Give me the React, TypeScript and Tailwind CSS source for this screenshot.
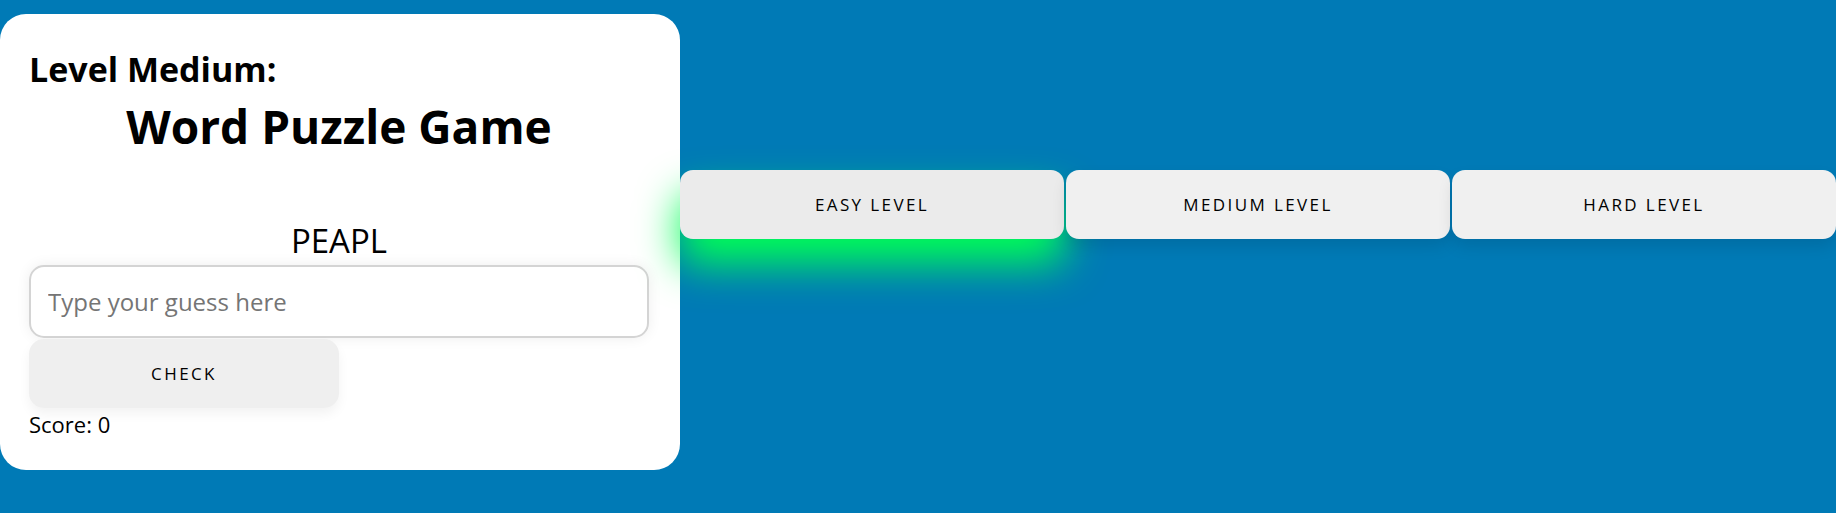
import React from "react";

export default function App() {
  const font = { fontFamily: '"Open Sans", "Noto Sans", sans-serif' };
  return (
    <div
      className="min-h-[513px] w-full bg-[#007ab6] flex items-start pt-[14px]"
      style={font}
    >
      <div className="w-[680px] h-[456px] shrink-0 bg-white rounded-[26px] pl-[29px] pr-[31px] pt-[38px] flex flex-col text-black">
        <h2 className="text-[34px] leading-[34px] font-bold">Level Medium:</h2>
        <h1 className="mt-[17px] text-[46px] leading-[46px] font-bold text-center">
          Word Puzzle Game
        </h1>
        <p className="mt-[75px] text-[33px] leading-[33px] text-center">PEAPL</p>
        <input
          type="text"
          placeholder="Type your guess here"
          className="mt-[8px] w-[620px] h-[73px] border-2 border-[#d4d4d4] rounded-[15px] pl-[17px] text-[24px] text-black placeholder:text-[#757575] outline-none shadow-[0_0_14px_rgba(0,0,0,0.07)]"
          style={font}
        />
        <button
          className="mt-[1px] w-[310px] h-[69px] bg-[#efefef] rounded-[15px] text-[17px] tracking-[2.4px] uppercase text-black shadow-[0_6px_12px_rgba(0,0,0,0.05)]"
          style={font}
        >
          Check
        </button>
        <p className="mt-[5px] text-[22px] leading-[22px]">Score: 0</p>
      </div>
      <div className="flex-1 flex gap-[2px] mt-[156px]">
        <button
          className="flex-1 h-[69px] bg-[#ebebeb] rounded-[13px] text-[17px] tracking-[2.4px] uppercase text-black shadow-[0_25px_42px_#00ff55]"
          style={font}
        >
          Easy Level
        </button>
        <button
          className="flex-1 h-[69px] bg-[#f0f0f0] rounded-[13px] text-[17px] tracking-[2.4px] uppercase text-black shadow-[0_8px_15px_rgba(0,0,0,0.1)]"
          style={font}
        >
          Medium Level
        </button>
        <button
          className="flex-1 h-[69px] bg-[#f0f0f0] rounded-[13px] text-[17px] tracking-[2.4px] uppercase text-black shadow-[0_8px_15px_rgba(0,0,0,0.1)]"
          style={font}
        >
          Hard Level
        </button>
      </div>
    </div>
  );
}
